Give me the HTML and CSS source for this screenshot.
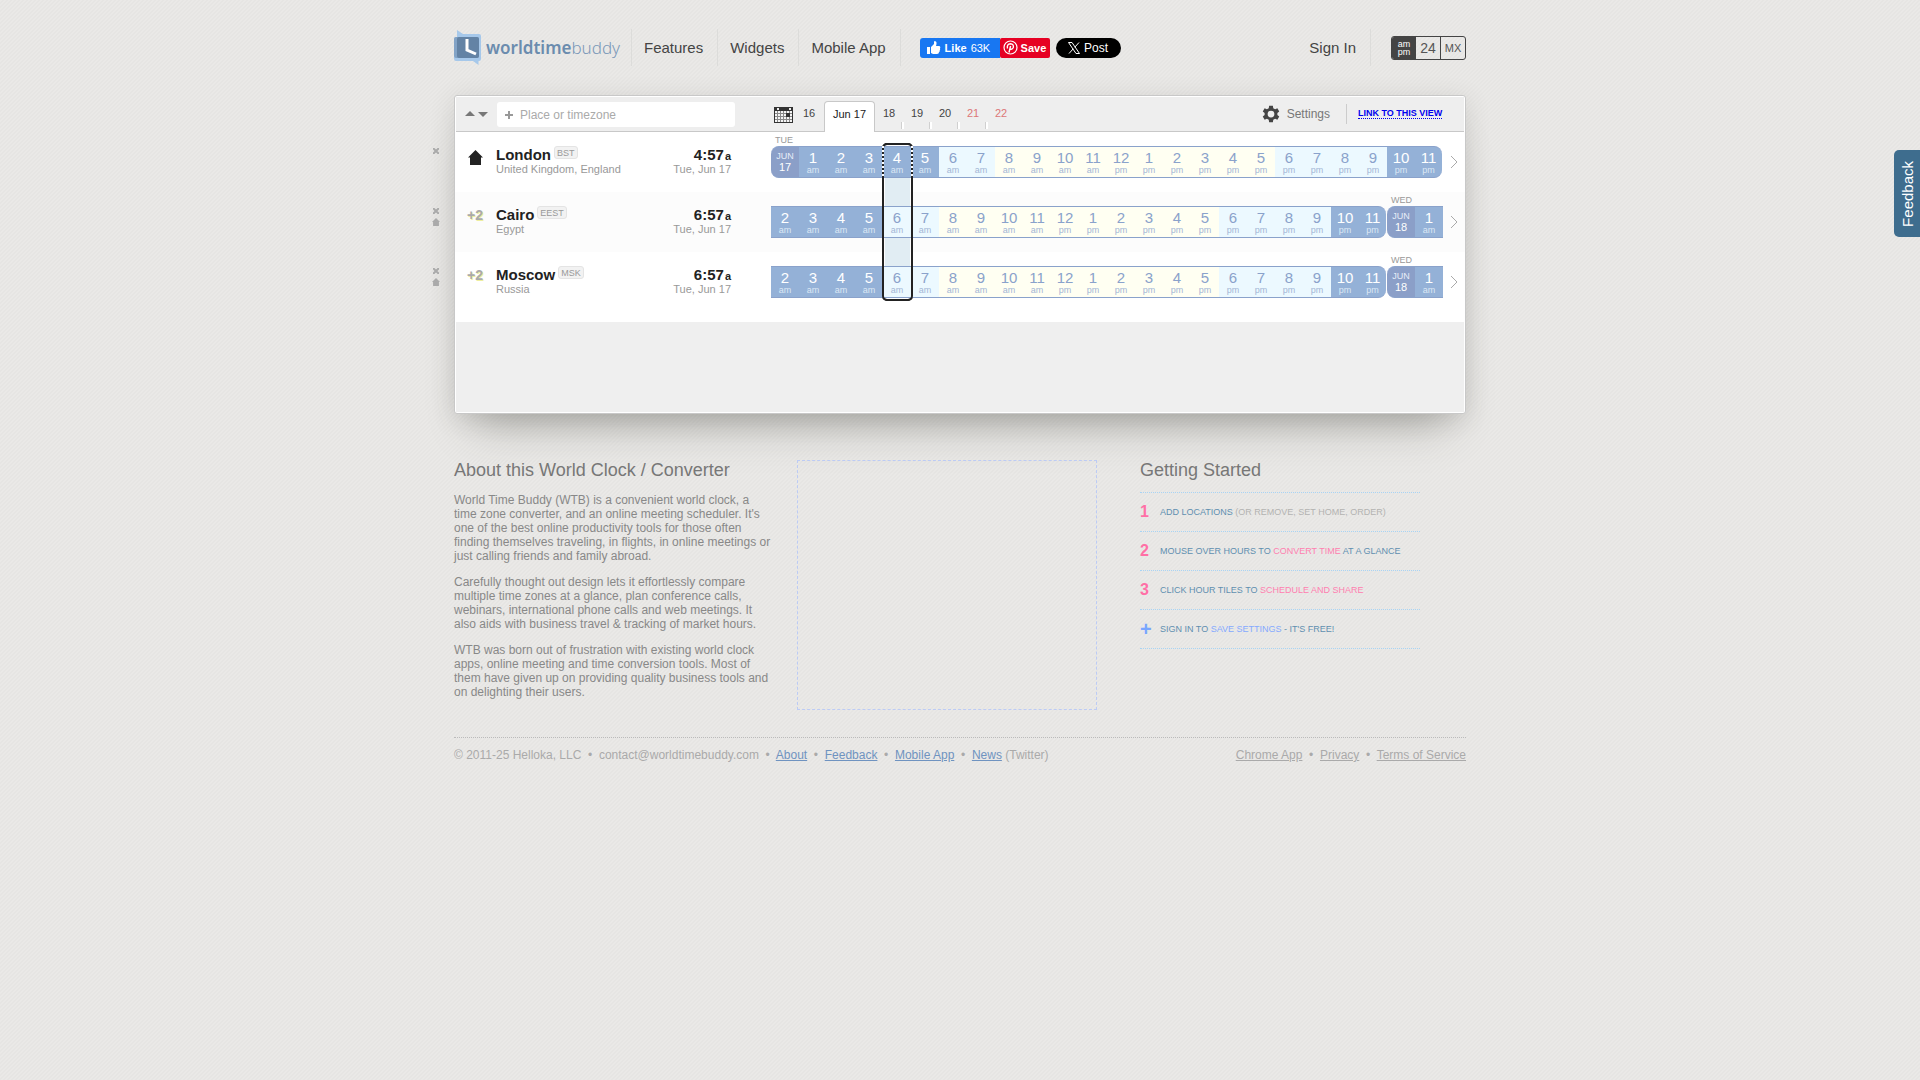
FILE: index.html
```html
<!DOCTYPE html>
<html lang="en">
<head>
<meta charset="utf-8">
<meta name="viewport" content="width=device-width, initial-scale=1">
<title>World Time Buddy</title>
<link rel="stylesheet" href="styles.css">
</head>
<body>
<div class="page">
  <header class="header">
    <a class="logo" href="#">
      <svg width="28" height="36" viewBox="0 0 28 36" aria-hidden="true">
        <path d="M3 0L9 4H25Q27 4 27 6V29Q27 31 25 31H24.500V35L19 31H2Q0 31 0 29V9Q0 7 2 7H3Z" fill="#a6c8ea"/>
        <rect x="0" y="7" width="25" height="21" rx="2" fill="#82a3c6"/>
        <rect x="3" y="7" width="22" height="21" rx="2" fill="#6383a5"/>
        <path d="M13 9V20L22 24" fill="none" stroke="#fff" stroke-width="3"/>
      </svg>
      <span class="wordmark"><b>worldtime</b>buddy</span>
    </a>
    <nav class="nav">
      <a href="#">Features</a>
      <a href="#">Widgets</a>
      <a href="#">Mobile App</a>
    </nav>
    <div class="social">
      <button class="like" type="button">
        <svg width="14" height="14" viewBox="0 0 14 14" aria-hidden="true"><path d="M0 6H3V13H0ZM4 6L7 3V1Q7 0 8 0Q10 .5 9.500 3L9 5H12Q14 5.500 13 7.500Q13.500 8.500 12.700 9.500Q13 10.500 12 11.300Q12 13 10 13H6L4 12Z" fill="#fff"/></svg>
        <b>Like</b> <span>63K</span>
      </button>
      <button class="save" type="button">
        <svg width="15" height="15" viewBox="0 0 15 15" aria-hidden="true"><circle cx="7.500" cy="7.500" r="6.500" fill="none" stroke="#fff" stroke-width="1.200"/><path d="M4.500 8.500Q3.500 4 7.500 3.700Q11 4 10.300 7.500Q9.300 9.800 7.300 9M7.600 6L6 12.500" fill="none" stroke="#fff" stroke-width="1.400"/></svg>
        <b>Save</b>
      </button>
      <button class="post" type="button">
        <svg width="12" height="12" viewBox="0 0 24 24" aria-hidden="true"><path d="M1 1H8L23 23H16ZM22 1L13.500 10.500M10.500 13.500L2 23" fill="none" stroke="#fff" stroke-width="2"/></svg>
        Post
      </button>
    </div>
    <div class="account">
      <a class="signin" href="#">Sign In</a>
      <div class="formats">
        <button class="on" type="button">am<br>pm</button>
        <button class="h24" type="button">24</button>
        <button type="button">MX</button>
      </div>
    </div>
  </header>

  <main class="panel">
    <div class="toolbar">
      <div class="sorter">
        <button type="button" aria-label="Sort up"><svg width="10" height="6" viewBox="0 0 10 6"><path d="M0 5L5 0L10 5Z" fill="#777"/></svg></button>
        <button type="button" aria-label="Sort down"><svg width="10" height="6" viewBox="0 0 10 6"><path d="M0 1L5 6L10 1Z" fill="#777"/></svg></button>
      </div>
      <label class="search">
        <svg width="8" height="8" viewBox="0 0 8 8" aria-hidden="true"><path d="M4 0V8M0 4H8" stroke="#999" stroke-width="2"/></svg>
        <input type="text" placeholder="Place or timezone" aria-label="Place or timezone">
      </label>
      <div class="dates">
        <button class="calendar" type="button" aria-label="Choose date">
          <svg width="19" height="16" viewBox="0 0 19 16" shape-rendering="crispEdges"><path d="M0 0H19V16H0Z" fill="#333"/><path d="M1 4H18V15H1Z" fill="#f4f4f4"/><path d="M3 1H5V3H3ZM15 1H17V3H15Z" fill="#eee"/><path d="M3.500 4V15M6.500 4V15M9.500 4V15M12.500 4V15M15.500 4V15M1 6.500H18M1 9.500H18M1 12.500H18" stroke="#888"/><path d="M12 6H16V10H12Z" fill="#333"/></svg>
        </button>
        <button type="button">16</button>
        <button class="current" type="button">Jun 17</button>
        <button class="tick" type="button">18</button>
        <button class="tick" type="button">19</button>
        <button class="tick" type="button">20</button>
        <button class="tick weekend" type="button">21</button>
        <button class="weekend" type="button">22</button>
      </div>
      <button class="settings" type="button">
        <svg width="18" height="18" viewBox="0 0 24 24" aria-hidden="true"><path fill="#444" fill-rule="evenodd" d="M9.500 1H14.500L15 4.200L17.500 5.600L20.500 4.400L23 8.700L20.500 10.700V13.300L23 15.300L20.500 19.600L17.500 18.400L15 19.800L14.500 23H9.500L9 19.800L6.500 18.400L3.500 19.600L1 15.300L3.500 13.300V10.700L1 8.700L3.500 4.400L6.500 5.600L9 4.200ZM12 7.500A4.500 4.500 0 1 0 12 16.500A4.500 4.500 0 1 0 12 7.500Z"/></svg>
        Settings
      </button>
      <div class="share"><a href="#">LINK TO THIS VIEW</a></div>
    </div>
    <div class="zones" id="zones"><div class="selection"></div></div>
    <div class="spare"></div>
  </main>

  <div class="info">
    <section class="about">
      <h2>About this World Clock / Converter</h2>
      <p>World Time Buddy (WTB) is a convenient world clock, a time zone converter, and an online meeting scheduler. It's one of the best online productivity tools for those often finding themselves traveling, in flights, in online meetings or just calling friends and family abroad.</p>
      <p>Carefully thought out design lets it effortlessly compare multiple time zones at a glance, plan conference calls, webinars, international phone calls and web meetings. It also aids with business travel &amp; tracking of market hours.</p>
      <p>WTB was born out of frustration with existing world clock apps, online meeting and time conversion tools. Most of them have given up on providing quality business tools and on delighting their users.</p>
    </section>
    <div class="promo"></div>
    <section class="start">
      <h2>Getting Started</h2>
      <ol>
        <li><b>1</b><span>ADD LOCATIONS <i class="muted">(OR REMOVE, SET HOME, ORDER)</i></span></li>
        <li><b>2</b><span>MOUSE OVER HOURS TO <i class="pink">CONVERT TIME</i> AT A GLANCE</span></li>
        <li><b>3</b><span>CLICK HOUR TILES TO <i class="pink">SCHEDULE AND SHARE</i></span></li>
        <li><b class="plus">+</b><span>SIGN IN TO <i class="blue">SAVE SETTINGS</i> - IT'S FREE!</span></li>
      </ol>
    </section>
  </div>

  <footer class="footer">
    <div class="primary">© 2011-25 Helloka, LLC &nbsp;•&nbsp; contact@worldtimebuddy.com &nbsp;•&nbsp; <a href="#">About</a> &nbsp;•&nbsp; <a href="#">Feedback</a> &nbsp;•&nbsp; <a href="#">Mobile App</a> &nbsp;•&nbsp; <a href="#">News</a> (Twitter)</div>
    <div><a href="#">Chrome App</a> &nbsp;•&nbsp; <a href="#">Privacy</a> &nbsp;•&nbsp; <a href="#">Terms of Service</a></div>
  </footer>
</div>
<button class="feedback" type="button">Feedback</button>
<script src="script.js"></script>
</body>
</html>
```
FILE: styles.css
```css
* { box-sizing: border-box; }
body {
  margin: 0;
  min-height: 100vh;
  font-family: "Liberation Sans", Arial, sans-serif;
  font-size: 12px;
  color: #888;
  background: linear-gradient(135deg, #eae9e7 25%, #e6e5e3 25% 50%, #eae9e7 50% 75%, #e6e5e3 75%) 0 0 / 4px 4px;
}
button { border: 0; padding: 0; margin: 0; background: none; font: inherit; color: inherit; cursor: pointer; }
a { color: inherit; }
svg { display: block; flex: none; }
.page { width: 1012px; max-width: 100%; margin: 0 auto; }

.header { display: flex; align-items: center; height: 95px; }
.logo { display: flex; align-items: center; gap: 4px; width: 177px; text-decoration: none; }
.wordmark { font-family: "Noto Sans", sans-serif; font-size: 17px; font-weight: 300; line-height: 24px; color: #7a98b8; }
.wordmark b { font-weight: 600; color: #6b8cae; }
.nav { display: flex; border-left: 1px solid #dcdcda; }
.nav a { padding: 0 14px 0 12px; border-right: 1px solid #dcdcda; font-size: 15px; line-height: 37px; color: #444; text-decoration: none; }
.social { display: flex; align-items: center; margin-left: 19px; font-size: 11px; color: #fff; }
.social button { display: flex; align-items: center; height: 20px; }
.like { width: 80px; padding-left: 7px; gap: 4px; background: #1877f2; border-radius: 3px 0 0 3px; }
.save { width: 50px; padding-left: 3px; gap: 3px; background: #e60023; border-radius: 2px; }
.social .post { width: 65px; margin-left: 6px; justify-content: center; gap: 4px; background: #000; border-radius: 10px; font-size: 12px; }
.account { display: flex; align-items: center; margin-left: auto; }
.signin { padding-right: 14px; margin-right: 20px; border-right: 1px solid #dcdcda; font-size: 15px; line-height: 37px; color: #444; text-decoration: none; }
.formats { display: flex; height: 24px; width: 75px; border: 1px solid #444; border-radius: 3px; overflow: hidden; color: #555; font-size: 11px; }
.formats button { flex: 1; }
.formats button + button + button { border-left: 1px solid #444; }
.formats .on { background: #444; color: #fff; font-size: 9px; line-height: 8px; }
.formats .h24 { font-size: 14px; }

.panel {
  border: 1px solid #c8c8c8;
  border-radius: 3px;
  background: #fff;
  box-shadow: 0 5px 25px rgba(70,70,60,.16), 0 30px 40px -20px rgba(70,70,60,.35);
}
.toolbar { display: flex; align-items: stretch; height: 35px; margin: 1px 1px 0; background: #eee; border-bottom: 1px solid #c8c8c8; }
.sorter { display: flex; align-items: center; gap: 3px; width: 41px; padding-left: 9px; }
.search { display: flex; align-items: center; gap: 7px; width: 238px; height: 25px; margin-top: 5px; padding-left: 8px; background: #fff; border-radius: 3px; }
.search input { flex: 1; min-width: 0; border: 0; padding: 0; outline: 0; background: none; font: inherit; }
.search input::placeholder { color: #aaa; }
.dates { display: flex; align-items: stretch; margin-left: 39px; font-size: 11px; color: #444; }
.dates button { position: relative; width: 28px; padding-bottom: 3px; }
.dates .calendar { width: 20px; padding: 1px 0 0; }
.dates .calendar + button { width: 30px; }
.dates .current { width: 51px; margin: 4px 0 -1px; padding-bottom: 6px; background: #fff; border: 1px solid #c8c8c8; border-bottom: 0; border-radius: 4px 4px 0 0; color: #222; }
.dates .weekend { color: #d77; }
.tick::after { content: ""; position: absolute; right: -1px; bottom: 2px; width: 2px; height: 7px; background: #fff; border-left: 1px solid #d0d0d0; }
.settings { display: flex; align-items: center; gap: 7px; margin-left: auto; padding-bottom: 1px; color: #777; }
.share { width: 118px; height: 20px; margin: 7px 0 0 16px; padding-left: 11px; border-left: 1px solid #ccc; font-size: 9px; font-weight: 700; line-height: 10px; }
.share a { display: inline-block; margin-top: 4px; color: #00e; text-decoration: none; border-bottom: 1px dotted #00e; white-space: nowrap; }

.zones { position: relative; padding-bottom: 10px; }
.zone { display: flex; height: 60px; padding-right: 7px; }
.zone:nth-child(odd) { background: #fcfcfc; }
.actions { position: absolute; left: -24px; width: 10px; margin-top: 16px; display: grid; gap: 4px; justify-items: center; }
.offset { width: 41px; padding: 15px 0 0 12px; font-size: 14px; font-weight: 700; line-height: 16px; color: #aaa; text-shadow: 1px 1px 0 #eeeea0; }
.offset svg { margin: 3px 0 0 1px; }
.place { flex: 1; padding-top: 14px; font-size: 11px; line-height: 13px; color: #999; }
.city { display: flex; gap: 3px; height: 17px; }
.city b { font-size: 15px; line-height: 18px; color: #222; }
.city span { height: 13px; padding: 0 2px; border: 1px solid #e4e4e4; border-radius: 3px; background: #f2f2f2; font-size: 9px; line-height: 12px; }
.clock { width: 100px; padding-top: 14px; margin-right: 40px; text-align: right; font-size: 11px; line-height: 13px; color: #999; }
.clock b { display: block; height: 17px; font-size: 15px; line-height: 18px; color: #222; }
.clock small { margin-left: 1px; font-size: 11px; }
.strip { position: relative; z-index: 2; display: flex; margin-top: 14px; height: 32px; }
.hour { position: relative; width: 28px; height: 32px; padding-top: 3px; border: solid #8aa2cb; border-width: 1px 0; text-align: center; font-size: 15px; line-height: 16px; color: #8aa2cb; }
.hour small { display: block; font-size: 9px; line-height: 8px; color: #a3b6d6; }
.day { background: #fffff2; }
.dusk { background: #ecf9ff; }
.night { background: #94b1d7; color: #fff; }
.night small { color: #dce8f5; }
.hour.date { background: #8b9fc8; border-radius: 8px 0 0 8px; color: #fff; font-size: 11px; line-height: 12px; padding-top: 4px; }
.hour.date small { line-height: 10px; color: #e8eef8; }
.date i { position: absolute; left: 4px; top: -12px; font-size: 9px; line-height: 10px; font-style: normal; color: #999; }
.last { width: 27px; margin-right: 1px; border-radius: 0 8px 8px 0; }
.next { margin: 18px 0 0 7px; width: 8px; }
.selection { position: absolute; z-index: 1; left: 427px; top: 11px; width: 31px; height: 158px; padding: 1px; border: 2px solid #222; border-radius: 5px; background: #e1edf3 content-box; }
.selection.frame { z-index: 3; background: none; }
.frame::before { content: ""; position: absolute; left: -2px; right: -2px; top: 1px; height: 32px; background:
  repeating-linear-gradient(#fff 0 2px, #222 2px 4px) left / 2px 100% no-repeat,
  repeating-linear-gradient(#fff 0 2px, #222 2px 4px) right / 2px 100% no-repeat; }
.spare { height: 90px; margin: 0 1px 1px; background: #efefef; }

.info { display: flex; align-items: flex-start; margin-top: 46px; }
h2 { margin: 0; font-size: 18px; line-height: 20px; font-weight: 400; color: #777; }
.about { width: 320px; margin-right: 23px; line-height: 14px; }
.about p { margin: 0 0 12px; }
.about h2 { margin-bottom: 13px; }
.promo { width: 300px; height: 250px; border: 1px dashed #bccbf5; }
.start { width: 280px; margin-left: 43px; }
.start ol { list-style: none; margin: 12px 0 0; padding: 0; border-top: 1px dotted #a8d4f5; }
.start li { display: flex; align-items: center; height: 39px; border-bottom: 1px dotted #a8d4f5; font-size: 9px; color: #5f8fb0; }
.start b { width: 20px; font-size: 16px; color: #ff70a6; }
.start .plus { color: #79a6ff; font-size: 20px; }
.start i { font-style: normal; }
.muted { color: #b3b3b1; }
.pink { color: #ff80b0; }
.blue { color: #85aaff; }
.footer { display: flex; justify-content: space-between; margin-top: 26px; padding-top: 10px; border-top: 1px dotted #bbb; line-height: 15px; color: #aaa; }
.primary a { color: #6f93c0; }
.feedback { position: fixed; right: 0; top: 150px; width: 26px; height: 87px; padding-left: 1px; background: #3e6d8e; border-radius: 5px 0 0 5px; color: #fff; font-size: 15px; line-height: 26px; writing-mode: sideways-lr; }
```
FILE: script.js
```js
const zones = [
  { city: "London", code: "BST", region: "United Kingdom, England", time: "4:57", first: 0, day: "TUE", date: 17 },
  { city: "Cairo", code: "EEST", region: "Egypt", time: "6:57", first: 2, offset: "+2", day: "WED", date: 18 },
  { city: "Moscow", code: "MSK", region: "Russia", time: "6:57", first: 2, offset: "+2", day: "WED", date: 18 }
];

const house = (size, color) =>
  `<svg width="${size}" height="${size}" viewBox="0 0 15 15"><path d="M7.500 0L15 7.500H13V15H2V7.500H0Z" fill="${color}"/></svg>`;
const cross = '<svg width="6" height="6" viewBox="0 0 6 6"><path d="M0 0L6 6M6 0L0 6" stroke="#aaa" stroke-width="2"/></svg>';

function shade(hour) {
  if (hour < 6 || hour > 21) return "night";
  return hour < 8 || hour > 17 ? "dusk" : "day";
}

function tile(zone, hour) {
  if (hour === 0) {
    return `<div class="hour date"><i>${zone.day}</i><small>JUN</small>${zone.date}</div>`;
  }
  const last = hour === 23 ? " last" : "";
  return `<div class="hour ${shade(hour)}${last}">${hour % 12 || 12}<small>${hour < 12 ? "am" : "pm"}</small></div>`;
}

const list = document.getElementById("zones");
for (const zone of zones) {
  const tiles = Array.from({ length: 24 }, (_, i) => tile(zone, (zone.first + i) % 24)).join("");
  const row = document.createElement("section");
  row.className = "zone";
  row.innerHTML = `
    <div class="actions">${cross}${zone.offset ? house(8, "#aaa") : ""}</div>
    <div class="offset">${zone.offset || house(15, "#222")}</div>
    <div class="place"><div class="city"><b>${zone.city}</b><span>${zone.code}</span></div>${zone.region}</div>
    <div class="clock"><b>${zone.time}<small>a</small></b>Tue, Jun 17</div>
    <div class="strip">${tiles}</div>
    <svg class="next" width="8" height="24" viewBox="0 0 8 24"><path d="M1 6L7 12L1 18" fill="none" stroke="#aaa"/></svg>`;
  list.append(row);
}
const frame = document.createElement("div");
frame.className = "selection frame";
list.append(frame);
```
